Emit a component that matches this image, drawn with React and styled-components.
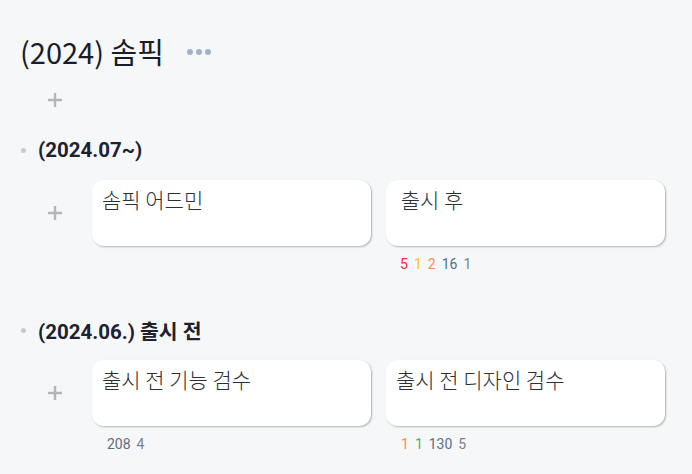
import React from "react";
import styled, { createGlobalStyle } from "styled-components";

const Global = createGlobalStyle`
  html, body { margin: 0; padding: 0; background: #f6f7f9; }
  body { font-family: Roboto, "Noto Sans CJK KR", sans-serif; color: #1f2430; }
`;

const Page = styled.div`
  width: 692px;
  height: 474px;
  box-sizing: border-box;
  padding: 34px 0 0 20px;
  display: flex;
  flex-direction: column;
  overflow: hidden;
`;

const Header = styled.div`
  display: flex;
  align-items: center;
  height: 34px;
  gap: 23px;
`;

const Title = styled.h1`
  margin: 0;
  font-family: "Noto Sans CJK KR", sans-serif;
  font-size: 29px;
  font-weight: 400;
  color: #181d29;
  line-height: 34px;
`;

const Dots = styled.div`
  display: flex;
  gap: 3px;
  padding-top: 2px;
  span {
    width: 6px;
    height: 6px;
    border-radius: 50%;
    background: #9fb2c6;
  }
`;

const AddRow = styled.div`
  height: 24px;
  margin-top: 20px;
  padding-left: 28px;
  display: flex;
  align-items: center;
`;

const PlusBox = styled.div`
  width: 14px;
  height: 14px;
  flex: none;
  display: flex;
`;

const Plus = () => (
  <PlusBox>
    <svg width="14" height="14" viewBox="0 0 14 14">
      <rect x="5.8" y="0" width="2.4" height="14" fill="#b3b5b8" />
      <rect x="0" y="5.8" width="14" height="2.4" fill="#b3b5b8" />
    </svg>
  </PlusBox>
);

const SectionHead = styled.div`
  display: flex;
  align-items: center;
  height: 24px;
  margin-top: ${(p) => p.$mt}px;
`;

const Bullet = styled.span`
  width: 5px;
  height: 5px;
  border-radius: 50%;
  background: #c8cacd;
  margin: 0 12px 0 1px;
`;

const SectionTitle = styled.h2`
  margin: 0;
  font-size: 20.5px;
  font-weight: 700;
  color: #1c2230;
  font-family: Roboto, "Noto Sans CJK KR", sans-serif;
`;

const CardRow = styled.div`
  display: flex;
  margin-top: 18px;
  padding-left: 28px;
`;

const PlusCol = styled.div`
  width: 14px;
  height: 66px;
  display: flex;
  align-items: center;
  margin-right: 30px;
`;

const Cards = styled.div`
  display: flex;
  gap: 15px;
`;

const CardCol = styled.div`
  width: 279px;
  display: flex;
  flex-direction: column;
`;

const Card = styled.div`
  height: 66px;
  box-sizing: border-box;
  background: #fff;
  border-radius: 12px;
  box-shadow: 1px 1px 2px rgba(0, 0, 0, 0.28);
  padding: 5px 10px;
  font-family: "Noto Sans CJK KR", sans-serif;
  font-size: 21px;
  font-weight: 300;
  line-height: 28px;
  color: #2b2f36;
  white-space: pre-wrap;
`;

const Stats = styled.div`
  display: flex;
  gap: 6px;
  height: 18px;
  margin-top: 9px;
  padding-left: ${(p) => p.$pl}px;
  font-size: 14px;
  line-height: 18px;
`;

const Stat = styled.span`
  color: ${(p) => p.$c};
`;

const COLORS = {
  red: "#f52b2b",
  yellow: "#fcc21b",
  orange: "#fb8c4a",
  green: "#26c26a",
  slate: "#5b6d85",
  gray: "#7d8187",
};

const sections = [
  {
    title: "(2024.07~)",
    mt: 26,
    cards: [
      { text: "솜픽 어드민", stats: [] },
      {
        text: " 출시 후",
        stats: [
          ["5", "red"],
          ["1", "yellow"],
          ["2", "orange"],
          ["16", "slate"],
          ["1", "gray"],
        ],
      },
    ],
  },
  {
    title: "(2024.06.) 출시 전",
    mt: 45,
    cards: [
      { text: "출시 전 기능 검수", stats: [["208", "slate"], ["4", "gray"]] },
      {
        text: "출시 전 디자인 검수",
        stats: [
          ["1", "orange"],
          ["1", "green"],
          ["130", "slate"],
          ["5", "gray"],
        ],
      },
    ],
  },
];

export default function App() {
  return (
    <>
      <Global />
      <Page>
        <Header>
          <Title>(2024) 솜픽</Title>
          <Dots>
            <span />
            <span />
            <span />
          </Dots>
        </Header>
        <AddRow>
          <Plus />
        </AddRow>
        {sections.map((s, i) => (
          <React.Fragment key={i}>
            <SectionHead $mt={s.mt}>
              <Bullet />
              <SectionTitle>{s.title}</SectionTitle>
            </SectionHead>
            <CardRow>
              <PlusCol>
                <Plus />
              </PlusCol>
              <Cards>
                {s.cards.map((c, j) => (
                  <CardCol key={j}>
                    <Card>{c.text}</Card>
                    <Stats $pl={j === 1 && i === 0 ? 14 : 15}>
                      {c.stats.map(([v, col], k) => (
                        <Stat key={k} $c={COLORS[col]}>
                          {v}
                        </Stat>
                      ))}
                    </Stats>
                  </CardCol>
                ))}
              </Cards>
            </CardRow>
          </React.Fragment>
        ))}
      </Page>
    </>
  );
}
